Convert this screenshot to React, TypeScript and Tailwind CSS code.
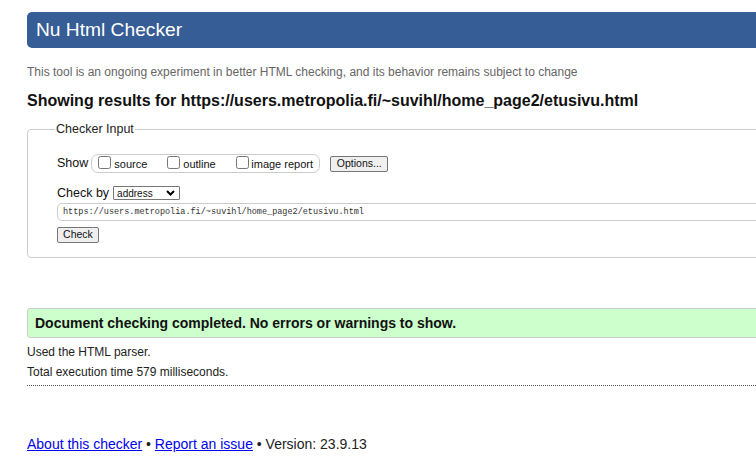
export default function App() {
  return (
    <div className="w-[756px] h-[468px] overflow-hidden bg-white text-[#111] font-['Liberation_Sans',Arial,sans-serif]">
      <div className="w-[820px] pl-[27px] pt-[12px]">
        <div className="h-[36px] bg-[#365d95] rounded-[5px] flex items-center pl-[9px]">
          <span className="text-white text-[19.2px] leading-none">Nu Html Checker</span>
        </div>
        <p className="mt-[17px] text-[12px] leading-[14px] text-[#666]">
          This tool is an ongoing experiment in better HTML checking, and its behavior remains subject to change
        </p>
        <h2 className="mt-[12px] text-[16px] leading-[19px] font-bold text-[#111]">
          Showing results for https://users.metropolia.fi/~suvihl/home_page2/etusivu.html
        </h2>
        <div className="relative mt-[19px] h-[129px] border border-[#ccc] rounded-[4px]">
          <span className="absolute left-[27px] top-[-9px] bg-white px-[1px] text-[12.5px] leading-[16px] text-[#222]">
            Checker Input
          </span>
          <div className="pl-[29px] pt-[23px]">
            <div className="flex items-center h-[20px]">
              <span className="text-[12.5px] mr-[3px]">Show</span>
              <span className="flex items-start h-[19px] border border-[#ccc] rounded-[7px] pl-[6px] pt-[1px] w-[229px] whitespace-nowrap">
                <input type="checkbox" className="shrink-0 w-[13px] h-[13px] m-0 mr-[3px]" />
                <span className="shrink-0 text-[11px] leading-[17px] w-[53px]">source</span>
                <input type="checkbox" className="shrink-0 w-[13px] h-[13px] m-0 mr-[3px]" />
                <span className="shrink-0 text-[11px] leading-[17px] w-[53px]">outline</span>
                <input type="checkbox" className="shrink-0 w-[13px] h-[13px] m-0 mr-[2px]" />
                <span className="shrink-0 text-[11px] leading-[17px]">image report</span>
              </span>
              <span className="ml-[10px] mt-[2px] h-[16px] w-[58px] border border-[#767676] bg-[#efefef] rounded-[2px] flex items-center justify-center text-[10.5px]">
                Options...
              </span>
            </div>
            <div className="flex items-center mt-[12px] h-[16px]">
              <span className="text-[12.5px] mr-[4px]">Check by</span>
              <span className="h-[14px] w-[67px] border border-[#767676] rounded-[1px] flex items-center justify-between pl-[3px] pr-[4px] text-[10px]">
                <span>address</span>
                <svg width="9" height="6" viewBox="0 0 9 6"><path d="M1 1l3.5 3.5L8 1" stroke="#000" strokeWidth="2" fill="none" /></svg>
              </span>
            </div>
            <div className="mt-[2px] h-[18px] border border-[#ccc] rounded-[5px] flex items-center pl-[5px] text-[8.5px] text-[#333] font-['Liberation_Mono',monospace]">
              https://users.metropolia.fi/~suvihl/home_page2/etusivu.html
            </div>
            <span className="mt-[6px] h-[16px] w-[42px] border border-[#767676] bg-[#efefef] rounded-[2px] flex items-center justify-center text-[10.5px]">
              Check
            </span>
          </div>
        </div>
        <div className="mt-[50px] h-[30px] bg-[#ccffcc] border border-[#ccc] rounded-[3px] flex items-center pl-[7px]">
          <span className="text-[14px] font-bold text-[#111]">Document checking completed. No errors or warnings to show.</span>
        </div>
        <p className="mt-[7px] text-[12px] leading-[14px] text-[#222]">Used the HTML parser.</p>
        <p className="mt-[6px] text-[12px] leading-[14px] text-[#222]">Total execution time 579 milliseconds.</p>
        <div className="mt-[6px] border-t border-dotted border-[#555]" />
        <p className="mt-[48px] text-[14px] text-[#222]">
          <a className="text-[#0000ee] underline">About this checker</a> • <a className="text-[#0000ee] underline">Report an issue</a> • Version: 23.9.13
        </p>
      </div>
    </div>
  );
}
